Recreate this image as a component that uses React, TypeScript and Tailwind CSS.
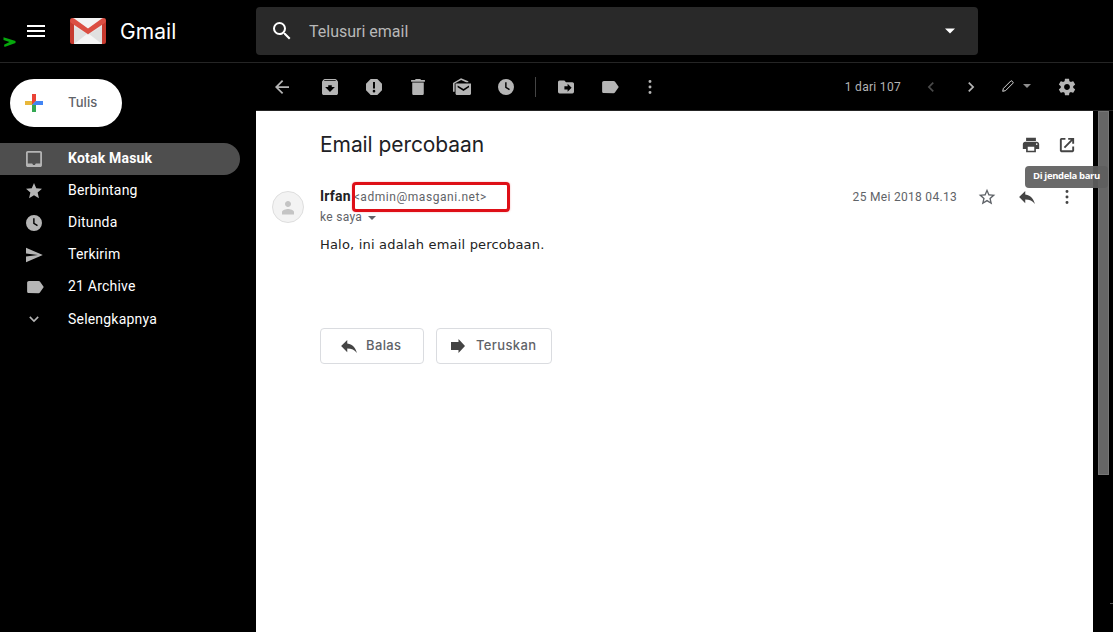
import React from 'react';
import { clsx } from 'clsx';

const paths = {
  menu: 'M3 18h18v-2H3v2zm0-5h18v-2H3v2zm0-7v2h18V6H3z',
  search: 'M15.5 14h-.79l-.28-.27A6.471 6.471 0 0 0 16 9.5 6.5 6.5 0 1 0 9.5 16c1.61 0 3.09-.59 4.23-1.57l.27.28v.79l5 4.99L20.49 19l-4.99-5zm-6 0C7.01 14 5 11.99 5 9.5S7.01 5 9.5 5 14 7.01 14 9.5 11.99 14 9.5 14z',
  back: 'M20 11H7.83l5.59-5.59L12 4l-8 8 8 8 1.41-1.41L7.83 13H20v-2z',
  archive: 'M20.54 5.23l-1.39-1.68C18.88 3.21 18.47 3 18 3H6c-.47 0-.88.21-1.16.55L3.46 5.23C3.17 5.57 3 6.02 3 6.5V19c0 1.1.9 2 2 2h14c1.1 0 2-.9 2-2V6.5c0-.48-.17-.93-.46-1.27zM12 17.5L6.5 12H10v-2h4v2h3.5L12 17.5zM5.12 5l.81-1h12l.94 1H5.12z',
  spam: 'M15.73 3H8.27L3 8.27v7.46L8.27 21h7.46L21 15.73V8.27L15.73 3zM12 18.2a1.5 1.5 0 1 1 0-3 1.5 1.5 0 0 1 0 3zm1.1-4.4h-2.2V6.500h2.200v7.300z',
  trash: 'M5.500 19.200c0 1 .8 1.800 1.800 1.800h9.400c1 0 1.800-.8 1.800-1.800V7h-13v12.200zM19.800 4h-4.300l-1-1h-5l-1 1H4.200v2h15.600V4z',
  unread: 'M4.600 8h17.700v11.400c0 1-.7 1.700-1.700 1.700H6.300c-1 0-1.700-.7-1.700-1.700V8zM7 10.300v2l6.700 4.200 6.300-4.200v-2l-6.300 4.100L7 10.300zM1.700 17.400V7.500L10.900 2l8.300 3.300v1.300h-2.500L11 4 3.600 8v9.400z',
  clock: 'M12 2.500a9.500 9.500 0 1 0 0 19 9.500 9.500 0 0 0 0-19zm3.700 13.300L11 12.900V6.500h1.700v5.500l3.900 2.400-.9 1.400z',
  move: 'M20 6h-8l-2-2H4c-1.100 0-2 .9-2 2v12c0 1.100.9 2 2 2h16c1.100 0 2-.9 2-2V8c0-1.100-.9-2-2-2zm-6 12v-3h-4v-4h4V8l5 5-5 5z',
  label: 'M17.630 5.840C17.270 5.330 16.670 5 16 5L5 5.010C3.900 5.010 3 5.900 3 7v10c0 1.100.9 1.990 2 1.990L16 19c.670 0 1.270-.330 1.630-.840L22 12l-4.370-6.160z',
  dots: 'M12 4a1.700 1.700 0 1 0 0 3.400A1.700 1.700 0 0 0 12 4zm0 6.300a1.700 1.700 0 1 0 0 3.400 1.700 1.700 0 0 0 0-3.400zm0 6.300a1.700 1.700 0 1 0 0 3.400 1.700 1.700 0 0 0 0-3.400z',
  left: 'M15.410 7.410L14 6l-6 6 6 6 1.410-1.410L10.830 12z',
  right: 'M10 6L8.590 7.410 13.170 12l-4.580 4.590L10 18l6-6z',
  down: 'M16.590 8.590L12 13.170 7.410 8.590 6 10l6 6 6-6z',
  caret: 'M2 7h20L12 17z',
  gear: 'M19.430 12.980c.040-.320.070-.640.070-.980s-.030-.660-.070-.980l2.110-1.650c.190-.150.240-.420.120-.640l-2-3.460c-.120-.220-.390-.300-.610-.220l-2.490 1c-.520-.400-1.080-.730-1.690-.980l-.380-2.650C14.460 2.180 14.250 2 14 2h-4c-.250 0-.460.180-.490.420l-.380 2.650c-.610.250-1.170.590-1.690.980l-2.490-1c-.230-.090-.490 0-.610.220l-2 3.460c-.130.220-.070.490.120.640l2.110 1.650c-.040.320-.070.650-.070.980s.030.660.070.980l-2.110 1.650c-.190.150-.240.420-.120.640l2 3.460c.120.220.390.300.610.220l2.490-1c.520.400 1.080.730 1.690.980l.380 2.650c.030.240.240.420.490.420h4c.250 0 .460-.180.490-.420l.380-2.650c.610-.250 1.170-.590 1.690-.980l2.490 1c.230.090.490 0 .610-.220l2-3.460c.120-.220.070-.490-.120-.640l-2.110-1.650zM12 15.500c-1.930 0-3.500-1.570-3.500-3.500s1.570-3.500 3.500-3.500 3.500 1.570 3.500 3.500-1.570 3.500-3.500 3.500z',
  inbox: 'M19 3H5c-1.100 0-2 .9-2 2v14c0 1.100.9 2 2 2h14c1.100 0 2-.9 2-2V5c0-1.100-.9-2-2-2zm0 14h-5l-1 1.700h-2L10 17H5V5h14v12z',
  star: 'M12 17.270L18.180 21l-1.640-7.030L22 9.240l-7.190-.610L12 2 9.190 8.630 2 9.240l5.460 4.730L5.820 21z',
  starOutline: 'M22 9.240l-7.190-.620L12 2 9.190 8.630 2 9.240l5.460 4.730L5.820 21 12 17.270 18.180 21l-1.630-7.030L22 9.240zM12 15.400l-3.760 2.270 1-4.280-3.320-2.880 4.380-.380L12 6.100l1.710 4.040 4.380.380-3.320 2.880 1 4.280L12 15.400z',
  send: 'M2.010 21L23 12 2.010 3 2 10l15 2-15 2z',
  print: 'M19 8H5c-1.660 0-3 1.340-3 3v6h4v4h12v-4h4v-6c0-1.660-1.340-3-3-3zm-3 11H8v-5h8v5zm3-7c-.550 0-1-.450-1-1s.450-1 1-1 1 .450 1 1-.450 1-1 1zm-1-9H6v4h12V3z',
  open: 'M18.600 18.600H5.400V5.400H10V3H5a2 2 0 0 0-2 2v14c0 1.100.9 2 2 2h14c1.100 0 2-.9 2-2v-5h-2.400v4.600zM13.500 3v2.400h3.400L7.900 14.400l1.700 1.700 9-9v3.400H21V3h-7.500z',
  reply: 'M10 9V5l-7 7 7 7v-4.100c5 0 8.500 1.600 11 5.100-1-5-4-10-11-11z',
  forward: 'M5 8h7.500V5l6.500 7-6.500 7v-3H5z',
  person: 'M12 12c2.210 0 4-1.790 4-4s-1.790-4-4-4-4 1.790-4 4 1.790 4 4 4zm0 2.500c-2.670 0-8 1.340-8 4V22h16v-3.500c0-2.660-5.330-4-8-4z',
};

type IconName = keyof typeof paths;

// the box is always an even number of pixels so icons centre on whole pixels
function Icon({ name, size = 21, className }: { name: IconName; size?: number; className?: string }) {
  const box = Math.ceil(size / 2) * 2;
  const view = (24 * box) / size;
  const start = 12 - view / 2;
  return (
    <svg width={box} height={box} viewBox={`${start} ${start} ${view} ${view}`} fill="currentColor" fillRule="evenodd" className={clsx('shrink-0', className)}>
      <path d={paths[name]} />
    </svg>
  );
}

function ToolButton({ name, size, className = 'w-11' }: { name: IconName; size?: number; className?: string }) {
  return (
    <button className={clsx('flex h-8 shrink-0 items-center justify-center', className)}>
      <Icon name={name} size={size} />
    </button>
  );
}

function GmailLogo() {
  return (
    <svg width="36" height="27" viewBox="0 0 36 27">
      <path d="M3 0h30v26H3z" fill="#e6e6e6" />
      <path d="M4 26l14-11 14 11z" fill="#f5f5f5" />
      <path d="M4 9l14 8 14-8v17L18 15 4 26z" fill="#dadada" opacity=".5" />
      <path d="M4 0h28L18 11z" fill="#f4f4f4" />
      <path d="M0 2.500L4 5v21H2a2 2 0 0 1-2-2zM36 2.500L32 5v21h2a2 2 0 0 0 2-2z" fill="#c63a2f" />
      <path d="M0 2.500C0 .8 1 0 2.500 0c.8 0 1.300.2 1.900.7L18 10.500 31.600.7c.6-.5 1.100-.7 1.900-.7C35 0 36 .8 36 2.500c0 1-.5 1.800-1.300 2.400L18 16.200 1.300 4.900C.5 4.300 0 3.500 0 2.500z" fill="#dc4f43" />
    </svg>
  );
}

function ComposeIcon() {
  return (
    <svg width="18" height="18" viewBox="0 0 18 18">
      <path d="M7 0h4v7l-4 4z" fill="#ea4335" />
      <path d="M0 7h7v4H0z" fill="#e8b73a" />
      <path d="M7 11l4-4v11H7z" fill="#34a853" />
      <path d="M11 7h7v4H7z" fill="#4285f4" />
    </svg>
  );
}

const folders: { label: string; icon: IconName; size: number; active?: boolean; more?: boolean }[] = [
  { label: 'Kotak Masuk', icon: 'inbox', size: 21.3, active: true },
  { label: 'Berbintang', icon: 'star', size: 19.2 },
  { label: 'Ditunda', icon: 'clock', size: 20.2 },
  { label: 'Terkirim', icon: 'send', size: 19.2 },
  { label: '21 Archive', icon: 'label', size: 21 },
  { label: 'Selengkapnya', icon: 'down', size: 19, more: true },
];

export default function App() {
  return (
    <div className="relative flex h-[632px] w-[1113px] flex-col overflow-hidden bg-black font-['Roboto','Liberation_Sans',sans-serif] text-white">
      <header className="flex h-[63px] shrink-0 border-b border-[#252525]">
        <div className="flex w-64 items-center pl-6">
          <Icon name="menu" size={24} />
          <div className="ml-[22px] mt-px"><GmailLogo /></div>
          <span className="ml-[14px] mt-px font-['Inter',sans-serif] text-[21px] leading-none tracking-[0.05px]">Gmail</span>
        </div>
        <div className="mt-[7px] flex h-12 w-[722px] items-center rounded bg-[#292929] pl-[14px] pr-[22px]">
          <Icon name="search" size={24} />
          <span className="ml-[15px] mt-0.5 text-base text-[#b8b8b8]">Telusuri email</span>
          <Icon name="caret" size={12} className="ml-auto" />
        </div>
      </header>

      <div className="flex min-h-0 flex-1">
        <aside className="w-64 shrink-0 pt-4">
          <button className="ml-[10px] flex h-12 w-28 items-center rounded-full bg-white pl-[15px]">
            <ComposeIcon />
            <span className="ml-[25px] font-['Inter',sans-serif] text-[13px] font-medium tracking-[0.1px] text-[#5f6368]">Tulis</span>
          </button>
          <nav className="mt-4 w-60">
            {folders.map((folder) => (
              <a key={folder.label} className={clsx('flex h-8 items-center rounded-r-full', folder.active && 'bg-[#4e4e4e]')}>
                <span className="ml-[22px] flex w-6 justify-center text-[#b5b5b5]">
                  <Icon name={folder.icon} size={folder.size} className={folder.icon === 'label' ? 'ml-0.5' : ''} />
                </span>
                <span className={clsx('ml-[22px] text-sm leading-5 tracking-[0.2px]', folder.active && 'font-bold', !folder.more && 'pb-0.5')}>
                  {folder.label}
                </span>
              </a>
            ))}
          </nav>
        </aside>

        <main className="flex min-w-0 flex-1 flex-col">
          <div className="flex h-12 shrink-0 items-center border-b border-[#252525] pl-1 pt-px text-[#b5b5b5]">
            <ToolButton name="back" />
            <ToolButton name="archive" size={21.3} className="ml-1 w-11" />
            <ToolButton name="spam" size={21.3} />
            <ToolButton name="trash" size={21.3} />
            <ToolButton name="unread" />
            <ToolButton name="clock" size={20.2} />
            <div className="ml-[7px] h-5 w-px bg-[#444]" />
            <ToolButton name="move" size={19.2} className="ml-2 w-11" />
            <ToolButton name="label" />
            <ToolButton name="dots" className="w-9" />
            <span className="-mt-px ml-auto text-xs tracking-[0.3px]">1 dari 107</span>
            <ToolButton name="left" size={20} className="ml-[10px] w-10 text-[#4a4a4a]" />
            <ToolButton name="right" size={20} className="w-10" />
            <svg width="12" height="12" viewBox="0 0 12 12" fill="none" stroke="#d6d6d6" className="-mt-0.5 ml-[11px]">
              <path d="M.7 11.300l.7-2.900 7.500-7.500c.7-.7 2.900 1.500 2.200 2.200l-7.500 7.500z" />
            </svg>
            <Icon name="caret" size={9.6} className="-mt-0.5 ml-2 text-[#8e8e8e]" />
            <ToolButton name="gear" size={20} className="ml-[26px] mr-[37px] w-[18px]" />
          </div>

          <div className="flex min-h-0 flex-1">
            <article className="w-[837px] bg-white pl-4 text-[#222]">
              <div className="flex h-[68px] items-center pl-12">
                <h1 className="font-['Inter',sans-serif] text-[21px] tracking-[-0.07px] text-[#202124]">Email percobaan</h1>
                <div className="ml-auto mr-2 flex text-[#444]">
                  <ToolButton name="print" size={19.6} className="w-9" />
                  <ToolButton name="open" size={19} className="w-9" />
                </div>
              </div>

              <div className="flex">
                <div className="mt-3 flex size-8 items-center justify-center rounded-full border border-[#dedede] bg-[#f3f3f3] text-[#c4c4c4]">
                  <Icon name="person" size={18} />
                </div>
                <div className="relative ml-4 flex-1 pt-2">
                  <div className="flex h-5 items-center">
                    <span className="-mt-0.5 text-sm font-bold tracking-[0.2px]">Irfan</span>
                    <span className="ml-[3px] text-xs tracking-[0.55px] text-[#5f6368]">&lt;admin@masgani.net&gt;</span>
                    <div className="-mr-px ml-auto flex items-center text-[#5f6368]">
                      <span className="text-xs tracking-[0.3px]">25 Mei 2018 04.13</span>
                      <ToolButton name="starOutline" size={20} className="ml-[10px] w-10" />
                      <ToolButton name="reply" className="w-10 text-[#444]" />
                      <ToolButton name="dots" className="mr-[7px] w-10 text-[#444]" />
                    </div>
                  </div>
                  <div className="absolute left-8 top-[3px] h-[30px] w-[158px] rounded-sm border-[3px] border-[#de0f17] shadow-[0_0_2px_rgba(222,15,23,0.35)]" />
                  <div className="flex h-5 items-center text-xs tracking-[0.3px] text-[#5f6368]">
                    ke saya
                    <Icon name="caret" size={9.6} className="ml-[5px] mt-0.5" />
                  </div>
                  <p className="mt-2 font-['DejaVu_Sans',sans-serif] text-[13px] leading-5 tracking-[0.19px]">Halo, ini adalah email percobaan.</p>
                </div>
              </div>

              <div className="mt-[73px] flex gap-3 pl-12 font-['Inter',sans-serif] text-[13px] font-medium tracking-[0.38px] text-[#5f6368]">
                <button className="flex h-9 w-26 items-center rounded border border-[#dadce0] pl-[17px]">
                  <Icon name="reply" className="text-[#444]" />
                  <span className="ml-[6px]">Balas</span>
                </button>
                <button className="flex h-9 w-29 items-center rounded border border-[#dadce0] pl-[9px]">
                  <Icon name="forward" size={24} className="text-[#444]" />
                  <span className="ml-[6px]">Teruskan</span>
                </button>
              </div>
            </article>
            <div className="ml-[5px] h-[364px] w-[11px] border border-[#777] bg-[#666]" />
          </div>
        </main>
      </div>

      {/* tooltip */}
      <div className="absolute left-[1025px] top-[166px] flex h-[22px] w-[83px] items-center rounded-sm bg-[#5f5f5f]/93 pb-px pl-2 font-['Open_Sans',sans-serif] text-[9.5px] font-bold tracking-[-0.35px] whitespace-nowrap">
        Di jendela baru
      </div>
      {/* prompt mark at the screen edge */}
      <svg className="absolute left-[3px] top-[36px] blur-[0.5px]" width="14" height="12" viewBox="0 0 14 12" fill="#06a80c">
        <path d="M.5 1.200L12.500 5v2L1.500 11 1 8.800 6.500 6 .5 4z" />
      </svg>
      <div className="absolute left-[1110px] top-[603px] h-px w-[3px] bg-[#555]" />
    </div>
  );
}
